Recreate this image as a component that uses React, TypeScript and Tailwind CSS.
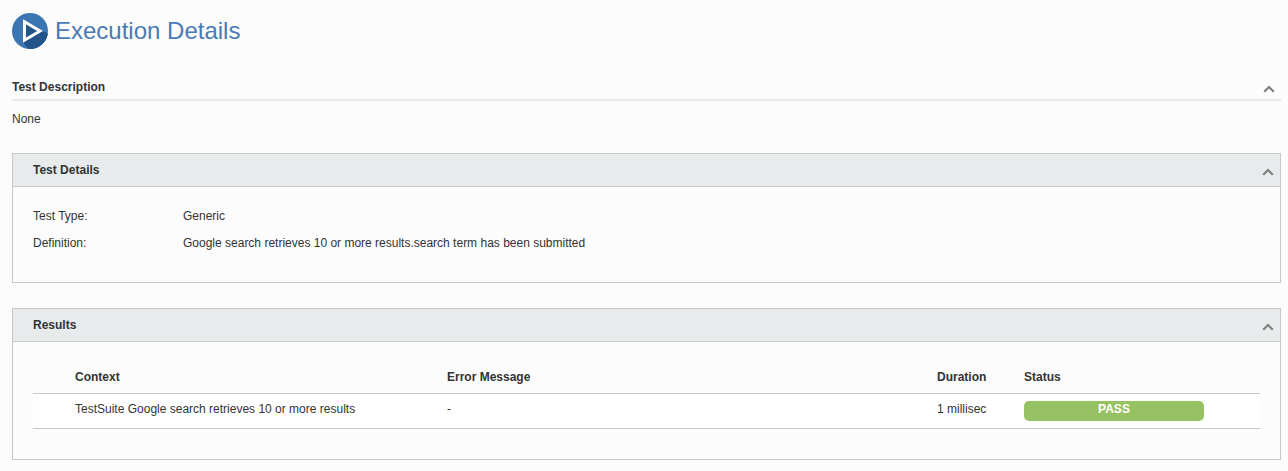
import { useState } from "react";
import type { ReactNode } from "react";

interface Result {
  context: string;
  error: string;
  duration: string;
  status: string;
}

const results: Result[] = [
  {
    context: "TestSuite Google search retrieves 10 or more results",
    error: "-",
    duration: "1 millisec",
    status: "PASS",
  },
];

function ExecutionIcon() {
  return (
    <svg viewBox="0 0 36 36" className="size-9 shrink-0" aria-hidden="true">
      <defs>
        <clipPath id="disc">
          <circle cx="18" cy="18" r="18" />
        </clipPath>
      </defs>
      <g clipPath="url(#disc)">
        <rect width="36" height="36" fill="#3c76b2" />
        <path d="M11 29.5L30.5 18L38 21.5V38H18.5Z" fill="#22548a" />
        <path d="M12.5 8.8L28 18L12.5 27.2Z" fill="#22548a" stroke="#fff" strokeWidth="3" />
      </g>
    </svg>
  );
}

function CollapseButton({ label, open, onClick }: { label: string; open: boolean; onClick: () => void }) {
  return (
    <button type="button" aria-label={`Toggle ${label}`} aria-expanded={open} onClick={onClick} className="cursor-pointer pt-1">
      <svg viewBox="0 0 12 8" className={open ? "h-2 w-3" : "h-2 w-3 rotate-180"} aria-hidden="true">
        <path d="M1.2 6.8L6 2L10.8 6.8" fill="none" stroke="#808080" strokeWidth="2.2" />
      </svg>
    </button>
  );
}

function Panel({ title, children }: { title: string; children: ReactNode }) {
  const [open, setOpen] = useState(true);

  return (
    <section className="border border-[#c8c8c8]">
      <div className="flex h-8 items-center justify-between bg-[#e7ebeb] pl-5 pr-1.5">
        <h2 className="font-bold">{title}</h2>
        <CollapseButton label={title} open={open} onClick={() => setOpen(!open)} />
      </div>
      {open && <div className="border-t border-[#c8c8c8] px-5">{children}</div>}
    </section>
  );
}

export default function App() {
  const [open, setOpen] = useState(true);

  return (
    <main className="min-h-screen bg-[#fcfcfc] pb-2.5 pl-3 pr-[7px] pt-[13px] font-['Liberation_Sans',Arial,sans-serif] text-xs text-[#333]">
      <header className="flex items-center gap-[7px]">
        <ExecutionIcon />
        <h1 className="text-2xl text-[#4a7ab5]">Execution Details</h1>
      </header>

      <section className="mt-[30px] mb-[26px]">
        <div className="flex items-center justify-between border-b-2 border-[#e9e9e9] pb-1 pr-1.5">
          <h2 className="font-bold">Test Description</h2>
          <CollapseButton label="Test Description" open={open} onClick={() => setOpen(!open)} />
        </div>
        {open && <p className="pt-2.5">None</p>}
      </section>

      <div className="flex flex-col gap-[25px]">
        <Panel title="Test Details">
          <dl className="grid grid-cols-[150px_1fr] gap-y-[11px] pb-[31px] pt-[21px]">
            <dt>Test Type:</dt>
            <dd>Generic</dd>
            <dt>Definition:</dt>
            <dd>Google search retrieves 10 or more results.search term has been submitted</dd>
          </dl>
        </Panel>

        <Panel title="Results">
          <div className="pb-[30px] pt-[27px]">
            <table className="w-full table-fixed border-collapse text-left">
              <colgroup>
                <col className="w-[42px]" />
                <col className="w-[372px]" />
                <col />
                <col className="w-[87px]" />
                <col className="w-[236px]" />
              </colgroup>
              <thead>
                <tr className="h-6 align-top">
                  <td />
                  <th>Context</th>
                  <th>Error Message</th>
                  <th>Duration</th>
                  <th>Status</th>
                </tr>
              </thead>
              <tbody>
                {results.map((result) => (
                  <tr key={result.context} className="border-y border-[#c8c8c8] bg-white align-top">
                    <td />
                    <td className="py-[7px]">{result.context}</td>
                    <td className="py-[7px]">{result.error}</td>
                    <td className="py-[7px]">{result.duration}</td>
                    <td className="py-[7px]">
                      <div className="h-5 w-[180px] rounded-[5px] bg-[#97c264] text-center font-bold text-white">
                        {result.status}
                      </div>
                    </td>
                  </tr>
                ))}
              </tbody>
            </table>
          </div>
        </Panel>
      </div>
    </main>
  );
}
